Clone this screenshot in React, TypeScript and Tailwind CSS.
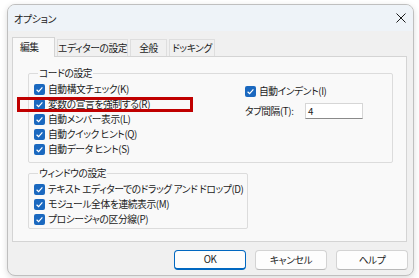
// Options dialog (VBE-style) — 編集 tab with annotated checkbox

import React from 'react';

const FONT = "font-['Noto_Sans_CJK_JP','Noto_Sans',sans-serif] [font-feature-settings:'palt']";

const Check: React.FC<{ label: string }> = ({ label }) => (
  <div className="h-[15px] flex items-center">
    <span className="w-[11px] h-[11px] rounded-[2px] bg-[#1a68bf] flex items-center justify-center flex-shrink-0">
      <svg width="9" height="9" viewBox="0 0 9 9">
        <path d="M1.6 4.7 L3.6 6.6 L7.4 2.4" fill="none" stroke="#fff" strokeWidth="1.2" />
      </svg>
    </span>
    <span className="ml-[3px] whitespace-nowrap">{label}</span>
  </div>
);

const Group: React.FC<{ title: string; className?: string; children: React.ReactNode }> = ({ title, className, children }) => (
  <fieldset className={`border border-[#dcdcdc] rounded-[2px] ${className ?? ''}`}>
    <legend className="ml-[4px] px-[1px] h-[14px] leading-[14px]">{title}</legend>
    {children}
  </fieldset>
);

const TABS: { label: string; w: string }[] = [
  { label: 'エディターの設定', w: 'w-[71px]' },
  { label: '全般', w: 'w-[37px]' },
  { label: 'ドッキング', w: 'w-[46px]' },
];

export default function App() {
  return (
    <div className={`w-[419px] h-[278px] bg-white pt-[4px] pl-[7px] text-[9.75px] tracking-[-0.4px] text-[#1b1b1b] ${FONT}`}>
      <div className="relative w-[407px] h-[272px] border border-[#bfbfbf] rounded-[8px] bg-[#f0f0f0] overflow-hidden shadow-[0_2px_6px_rgba(0,0,0,0.15)] flex flex-col">
        {/* ── Title bar ── */}
        <div className="h-[26px] bg-[#eef3f8] flex items-center justify-between pl-[6px] pr-[7px] flex-shrink-0">
          <span className="text-[10px]">オプション</span>
          <svg width="10" height="10" viewBox="0 0 10 10">
            <path d="M0.5 0.5 L9.5 9.5 M9.5 0.5 L0.5 9.5" stroke="#1b1b1b" strokeWidth="1" />
          </svg>
        </div>

        {/* ── Tabs ── */}
        <div className="pt-[6px] pl-[4px] pr-[6px]">
          <div className="flex items-end h-[19px] gap-[2px]">
            <div className="relative z-10 -mb-px w-[43px] h-[20px] bg-[#f9f9f9] border border-b-0 border-[#d4d4d4] pl-[7px] leading-[19px]">
              編集
            </div>
            {TABS.map(t => (
              <div key={t.label} className={`${t.w} h-[17px] bg-[#f0f0f0] border border-b-0 border-[#dedede] text-center leading-[16px] whitespace-nowrap`}>
                {t.label}
              </div>
            ))}
          </div>

          {/* ── Panel ── */}
          <div className="h-[186px] bg-[#f9f9f9] border border-[#d4d4d4] pl-[15px] pr-[13px] pt-[9px]">
            <Group title="コードの設定" className="h-[97px] pl-[5px] pt-[2px]">
              <div className="flex">
                <div className="w-[211px]">
                  <Check label="自動構文チェック(K)" />
                  <Check label="変数の宣言を強制する(R)" />
                  <Check label="自動メンバー表示(L)" />
                  <Check label="自動クイック ヒント(Q)" />
                  <Check label="自動データ ヒント(S)" />
                </div>
                <div className="pt-[2px]">
                  <Check label="自動インデント(I)" />
                  <div className="mt-[4px] flex items-center h-[16px]">
                    <span className="w-[60px]">タブ間隔(T):</span>
                    <div className="w-[58px] h-[16px] bg-white border border-[#d6d6d6] border-b-[#8a8a8a] pl-[2px] leading-[14px]">4</div>
                  </div>
                </div>
              </div>
            </Group>

            <Group title="ウィンドウの設定" className="mt-[3px] w-[220px] h-[63px] pl-[5px] pt-[2px]">
              <Check label="テキスト エディターでのドラッグ アンド ドロップ(D)" />
              <Check label="モジュール全体を連続表示(M)" />
              <Check label="プロシージャの区分線(P)" />
            </Group>
          </div>
        </div>

        {/* ── Buttons ── */}
        <div className="mt-[8px] pr-[5px] flex justify-end gap-[9px]">
          <button className="w-[72px] h-[20px] rounded-[4px] bg-[#fdfdfd] border border-[#0067c0] border-b-2">OK</button>
          <button className="w-[72px] h-[20px] rounded-[4px] bg-[#fdfdfd] border border-[#d3d3d3] border-b-[#b8b8b8]">キャンセル</button>
          <button className="w-[72px] h-[20px] rounded-[4px] bg-[#fdfdfd] border border-[#d3d3d3] border-b-[#b8b8b8]">ヘルプ</button>
        </div>

        {/* ── Annotation ── */}
        <div className="absolute left-[9px] top-[92px] w-[176px] h-[15px] border-[3px] border-[#c00000]" />
      </div>
    </div>
  );
}
